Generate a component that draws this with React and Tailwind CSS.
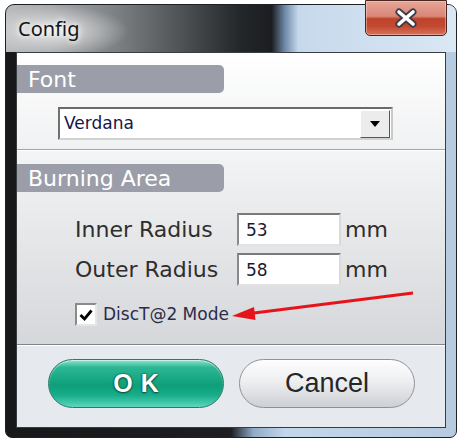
import React from "react";

const CloseButton = () => (
  <div className="-mt-[5px] mr-[9px] w-[82px] h-[36px] rounded-b-[5px] border border-[#4b2620] bg-[image:linear-gradient(180deg,#e6a597_0%,#d88777_45%,#c0432c_52%,#c24a31_75%,#d8735c_100%)] shadow-[inset_0_0_0_1px_rgba(255,220,210,0.45)] flex items-center justify-center">
    <svg width="24" height="20" viewBox="0 0 24 20">
      <path d="M5 4 L19 16 M19 4 L5 16" stroke="#3b3a48" strokeWidth="7" strokeLinecap="round" fill="none" />
      <path d="M5 4 L19 16 M19 4 L5 16" stroke="#ffffff" strokeWidth="3.6" strokeLinecap="round" fill="none" />
    </svg>
  </div>
);

const Tab = ({ children }) => (
  <div className="w-[207px] h-[28px] rounded-r-[5px] bg-[#9b9ea8] pl-[11px] text-[22px] leading-[29px] text-white">
    {children}
  </div>
);

const Field = ({ label, value }) => (
  <div className="flex items-center h-[33px]">
    <div className="w-[162px] text-[22px] leading-[26px] text-[#2e2e2e]">{label}</div>
    <input
      readOnly
      defaultValue={value}
      className="w-[104px] h-[33px] border-2 border-t-[#7a7a7a] border-l-[#8a8a8a] border-r-[#dadada] border-b-[#e2e2e2] bg-white pl-[7px] text-[17px] text-[#1b1b30] outline-none"
    />
    <div className="ml-[4px] text-[22px] leading-[26px] text-[#2e2e2e]">mm</div>
  </div>
);

export default function App() {
  return (
    <div className="relative w-[460px] h-[442px] bg-white pt-[4px] pl-[5px] overflow-hidden font-['DejaVu_Sans',sans-serif]">
      <div className="w-[452px] h-[434px] flex flex-col rounded-t-[9px] rounded-b-[7px] border border-[#1e2124] bg-[image:linear-gradient(90deg,#16181a_0%,#1c1e21_50%,#90abc8_55%,#c3d6ea_62%,#b7cbe0_100%)]">
        {/* title bar */}
        <div className="h-[47px] flex justify-between items-start rounded-t-[8px] bg-[image:radial-gradient(ellipse_75px_26px_at_48px_26px,rgba(236,236,236,0.9),rgba(236,236,236,0)),linear-gradient(90deg,#b9bbbd_0%,#a4a7aa_10%,#7c7f82_25%,#4c4f52_40%,#24272a_52%,#1b1d20_59%,#6f8aa8_62%,#c6d9ec_65%,#dae7f4_100%)]">
          <div className="pl-[12px] pt-[12px] text-[20px] leading-[24px] font-['Noto_Sans',sans-serif] text-[#151515] [text-shadow:0_0_5px_#fff,0_0_9px_rgba(255,255,255,0.9)]">
            Config
          </div>
          <CloseButton />
        </div>

        {/* body */}
        <div className="flex-1 px-[10px] pb-[9px] flex">
          <div className="w-[430px] h-[376px] border border-[#3a3d40] flex flex-col bg-white">
            {/* Font */}
            <div className="h-[97px] pt-[12px] border-b border-[#a2a6ab] bg-[image:linear-gradient(180deg,#ffffff,#f0f1f2)]">
              <Tab>Font</Tab>
              <div className="ml-[41px] mt-[14px] w-[335px] h-[33px] border-2 border-t-[#6a6a6a] border-l-[#707070] border-r-[#c9c9c9] border-b-[#d2d2d2] bg-white flex items-center justify-between">
                <div className="pl-[4px] text-[17px] text-[#15154a]">Verdana</div>
                <div className="mr-[1px] w-[30px] h-[28px] bg-[#ececec] border border-t-white border-l-white border-r-[#555555] border-b-[#555555] flex items-center justify-center">
                  <svg width="10" height="6" viewBox="0 0 10 6">
                    <path d="M0 0 L10 0 L5 6 Z" fill="#000" />
                  </svg>
                </div>
              </div>
            </div>

            {/* Burning Area */}
            <div className="h-[195px] pt-[13px] border-t border-t-white border-b border-b-[#80848a] bg-[image:linear-gradient(180deg,#f3f4f5,#d5d7da)]">
              <Tab>Burning Area</Tab>
              <div className="pl-[58px] mt-[21px] flex flex-col gap-[7px]">
                <Field label="Inner Radius" value="53" />
                <Field label="Outer Radius" value="58" />
                <div className="mt-[10px] flex items-center h-[23px]">
                  <div className="w-[22px] h-[23px] border-2 border-t-[#8a8a8a] border-l-[#8a8a8a] border-r-[#e6e6e6] border-b-[#e6e6e6] bg-white flex items-center justify-center">
                    <svg width="14" height="14" viewBox="0 0 14 14">
                      <path d="M1.5 7 L5.5 11 L12.5 2.5" stroke="#000" strokeWidth="2.8" fill="none" />
                    </svg>
                  </div>
                  <div className="ml-[6px] text-[17px] text-[#2b2d4a]">DiscT@2 Mode</div>
                </div>
              </div>
            </div>

            {/* buttons */}
            <div className="flex-1 border-t border-t-white bg-[#e6e9ed] pt-[13px] pl-[31px] flex gap-[15px] items-start">
              <div className="w-[176px] h-[49px] rounded-full border border-[#2f7a67] bg-[image:linear-gradient(180deg,#8ae4cc_0%,#2bb794_16%,#0d9f79_55%,#18ad8b_75%,#5ad7bc_100%)] shadow-[inset_0_1px_1px_rgba(255,255,255,0.6)] flex items-center justify-center pl-[8px] font-['Liberation_Sans',sans-serif] font-bold text-[25px] tracking-[8px] text-white [text-shadow:0_0_1px_#0a4f3d,0_0_2px_#0a4f3d,0_1px_2px_#0a4f3d]">
                OK
              </div>
              <div className="w-[176px] h-[49px] rounded-full border border-[#8e9196] bg-[image:linear-gradient(180deg,#fdfdfd_0%,#eeeff1_45%,#dcdee1_75%,#cdd0d4_100%)] shadow-[inset_0_1px_1px_rgba(255,255,255,0.9)] flex items-center justify-center font-['Liberation_Sans',sans-serif] text-[27px] text-[#262626]">
                Cancel
              </div>
            </div>
          </div>
        </div>
      </div>

      {/* annotation arrow */}
      <svg className="absolute left-0 top-0 pointer-events-none" width="460" height="442" viewBox="0 0 460 442">
        <line x1="413" y1="293" x2="254" y2="313" stroke="#e5141b" strokeWidth="3" />
        <polygon points="232,316 254,307 255.5,320" fill="#e5141b" />
      </svg>
    </div>
  );
}
